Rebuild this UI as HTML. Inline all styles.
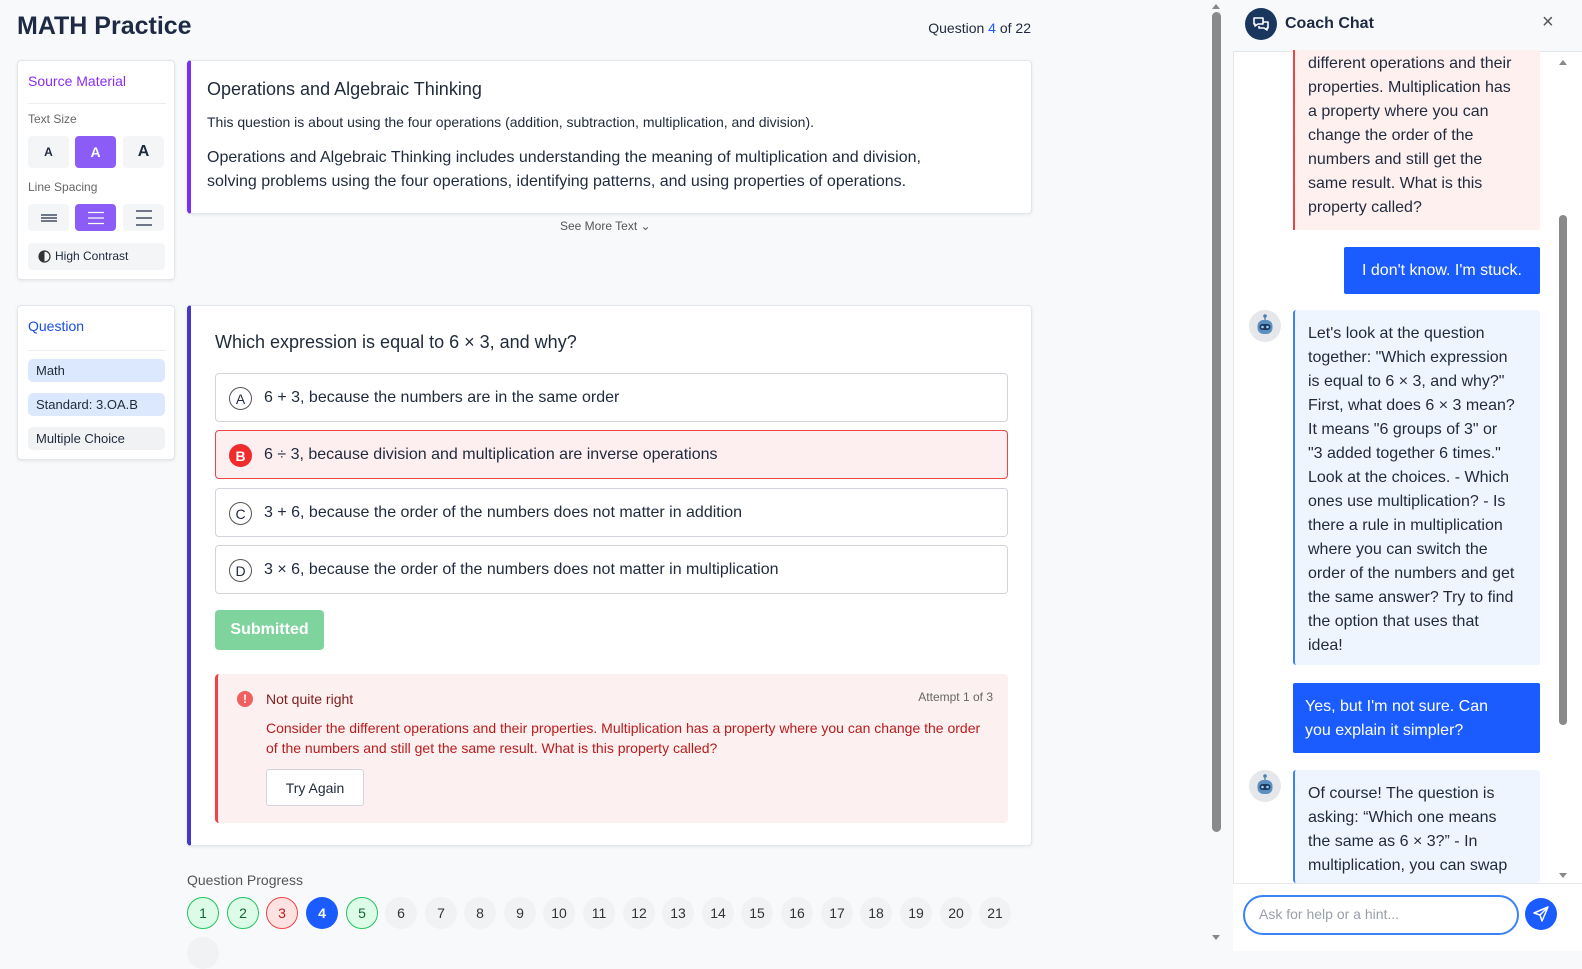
<!DOCTYPE html>
<html><head><meta charset="utf-8"><style>
*{box-sizing:border-box;margin:0;padding:0}
body{width:1582px;height:951px;overflow:hidden;background:#f8f9fb;font-family:"Liberation Sans",sans-serif;color:#1f2a3c;position:relative}
.abs{position:absolute}
.card{position:absolute;background:#fff;border:1px solid #e3e6ea;border-radius:4px;box-shadow:0 1px 3px rgba(0,0,0,.08)}
.btn{position:absolute;width:41px;height:32px;border-radius:4px;background:#f4f5f7;display:flex;align-items:center;justify-content:center;font-size:14px;font-weight:bold;color:#1f2a3c}
.btn.on{background:#8b5cf6;color:#fff}
.tag{position:absolute;left:10px;width:137px;height:23px;border-radius:5px;font-size:13px;padding:4px 8px;color:#1f2a3c}
.opt{position:absolute;left:27px;width:793px;height:49px;border:1px solid #d1d5db;border-radius:4px;background:#fff;font-size:16px;display:flex;align-items:center;padding-left:48px}
.opt .l{position:absolute;left:13px;top:13px;width:23px;height:23px;border:1px solid #555;border-radius:50%;font-size:14px;display:flex;align-items:center;justify-content:center}
.c{position:absolute;top:897px;width:32px;height:32px;border-radius:50%;background:#f1f2f4;font-size:14px;display:flex;align-items:center;justify-content:center;color:#333}
.bub{position:absolute;left:1293px;width:247px;font-size:16px;line-height:24px;padding-left:13px;color:#1f2a3c}
.av{position:absolute;left:1249px;width:32px;height:32px;border-radius:50%;background:#e5e7eb}
</style></head><body>
<div class="abs" style="left:17px;top:12px;font-size:25px;font-weight:bold;color:#1e2a44">MATH Practice</div>
<div class="abs" style="left:900px;top:20px;width:131px;text-align:right;font-size:14px;color:#1f2a3c">Question <span style="color:#1a5cff">4</span> of 22</div>

<div class="card" style="left:17px;top:60px;width:158px;height:220px">
 <div class="abs" style="left:10px;top:12px;font-size:14px;color:#8b2cf5">Source Material</div>
 <div class="abs" style="left:10px;top:42px;width:138px;border-top:1px solid #eceef1"></div>
 <div class="abs" style="left:10px;top:51px;font-size:12px;color:#666">Text Size</div>
 <div class="btn" style="left:10px;top:75px;font-size:12px">A</div>
 <div class="btn on" style="left:57px;top:75px">A</div>
 <div class="btn" style="left:105px;top:75px;font-size:16px">A</div>
 <div class="abs" style="left:10px;top:119px;font-size:12px;color:#666">Line Spacing</div>
 <div class="btn" style="left:10px;top:143px;height:27px"><svg width="18" height="10"><path d="M1 2h16M1 5h16M1 8h16" stroke="#1e2a44" stroke-width="1.3"/></svg></div>
 <div class="btn on" style="left:57px;top:143px;height:27px"><svg width="18" height="14"><path d="M1 1.5h16M1 7h16M1 12.5h16" stroke="#fff" stroke-width="1.3"/></svg></div>
 <div class="btn" style="left:105px;top:143px;height:27px"><svg width="18" height="16"><path d="M1 1h16M1 8h16M1 15h16" stroke="#1e2a44" stroke-width="1.3"/></svg></div>
 <div class="abs" style="left:10px;top:182px;width:137px;height:27px;background:#f4f5f7;border-radius:4px;font-size:12px;padding:6px 0 0 27px;color:#1f2a3c">High Contrast
  <svg class="abs" style="left:10px;top:7px" width="13" height="13"><circle cx="6.5" cy="6.5" r="5.5" fill="none" stroke="#333" stroke-width="1.2"/><path d="M6.5 1a5.5 5.5 0 0 0 0 11z" fill="#333"/></svg></div>
</div>

<div class="card" style="left:17px;top:305px;width:158px;height:155px">
 <div class="abs" style="left:10px;top:12px;font-size:14px;color:#1a4fe0">Question</div>
 <div class="abs" style="left:10px;top:44px;width:138px;border-top:1px solid #eceef1"></div>
 <div class="tag" style="top:53px;background:#dbe8fd">Math</div>
 <div class="tag" style="top:87px;background:#dbe8fd">Standard: 3.OA.B</div>
 <div class="tag" style="top:121px;background:#f1f2f4">Multiple Choice</div>
</div>

<div class="card" style="left:187px;top:60px;width:845px;height:154px;border-left:4px solid #7c2ff0">
 <div class="abs" style="left:16px;top:18px;font-size:18px">Operations and Algebraic Thinking</div>
 <div class="abs" style="left:16px;top:53px;font-size:14px">This question is about using the four operations (addition, subtraction, multiplication, and division).</div>
 <div class="abs" style="left:16px;top:85px;font-size:16px;line-height:24px;width:765px">Operations and Algebraic Thinking includes understanding the meaning of multiplication and division, solving problems using the four operations, identifying patterns, and using properties of operations.</div>
</div>
<div class="abs" style="left:560px;top:219px;font-size:12px;color:#555">See More Text ⌄</div>

<div class="card" style="left:187px;top:305px;width:845px;height:541px;border-left:4px solid #4338ca">
 <div class="abs" style="left:24px;top:26px;font-size:18px">Which expression is equal to 6 × 3, and why?</div>
 <div class="opt" style="top:67px;left:24px"><span class="l">A</span>6 + 3, because the numbers are in the same order</div>
 <div class="opt" style="top:124px;left:24px;background:#fdeff0;border-color:#ef4444"><span class="l" style="background:#ef2b2b;border-color:#ef2b2b;color:#fff;font-weight:bold">B</span>6 ÷ 3, because division and multiplication are inverse operations</div>
 <div class="opt" style="top:182px;left:24px"><span class="l">C</span>3 + 6, because the order of the numbers does not matter in addition</div>
 <div class="opt" style="top:239px;left:24px"><span class="l">D</span>3 × 6, because the order of the numbers does not matter in multiplication</div>
 <div class="abs" style="left:24px;top:304px;width:109px;height:40px;background:#7fd39d;border-radius:4px;color:#fff;font-size:16px;font-weight:bold;display:flex;align-items:center;justify-content:center">Submitted</div>
 <div class="abs" style="left:24px;top:368px;width:793px;height:149px;background:#fdf0f0;border-left:3px solid #ef4444;border-radius:4px">
  <div class="abs" style="left:19px;top:17px;width:16px;height:16px;border-radius:50%;background:#f0605e;color:#fff;font-size:12px;font-weight:bold;text-align:center;line-height:16px">!</div>
  <div class="abs" style="left:48px;top:17px;font-size:14px;color:#7f1d1d">Not quite right</div>
  <div class="abs" style="right:15px;top:16px;font-size:12px;color:#666">Attempt 1 of 3</div>
  <div class="abs" style="left:48px;top:44px;width:722px;font-size:14px;line-height:20px;color:#b91c1c">Consider the different operations and their properties. Multiplication has a property where you can change the order of the numbers and still get the same result. What is this property called?</div>
  <div class="abs" style="left:48px;top:95px;width:98px;height:37px;border:1px solid #d1d5db;border-radius:3px;background:#fff;font-size:14px;display:flex;align-items:center;justify-content:center">Try Again</div>
 </div>
</div>

<div class="abs" style="left:187px;top:872px;font-size:14px;color:#555">Question Progress</div>
<div class="c" style="left:187px;background:#dcfce7;border:1px solid #22c55e;color:#166534">1</div>
<div class="c" style="left:227px;background:#dcfce7;border:1px solid #22c55e;color:#166534">2</div>
<div class="c" style="left:266px;background:#fee2e2;border:1px solid #ef4444;color:#b91c1c">3</div>
<div class="c" style="left:306px;background:#1a5cff;color:#fff;font-weight:bold">4</div>
<div class="c" style="left:346px;background:#dcfce7;border:1px solid #22c55e;color:#166534">5</div>
<div class="c" style="left:385px">6</div><div class="c" style="left:425px">7</div><div class="c" style="left:464px">8</div><div class="c" style="left:504px">9</div><div class="c" style="left:543px">10</div><div class="c" style="left:583px">11</div><div class="c" style="left:623px">12</div><div class="c" style="left:662px">13</div><div class="c" style="left:702px">14</div><div class="c" style="left:741px">15</div><div class="c" style="left:781px">16</div><div class="c" style="left:821px">17</div><div class="c" style="left:860px">18</div><div class="c" style="left:900px">19</div><div class="c" style="left:940px">20</div><div class="c" style="left:979px">21</div>
<div class="c" style="left:187px;top:937px"></div>

<div class="abs" style="left:1210px;top:0;width:14px;height:951px;background:#f8f9fb"></div>
<div class="abs" style="left:1212px;top:12px;width:9px;height:820px;background:#8a8a8a;border-radius:5px"></div>
<div class="abs" style="left:1212px;top:0px;width:0;height:0;border:4px solid transparent;border-bottom:5px solid #888"></div>
<div class="abs" style="left:1212px;top:935px;width:0;height:0;border:4px solid transparent;border-top:5px solid #888"></div>

<div class="abs" style="left:1233px;top:0;width:349px;height:951px;background:#fff;border-left:1px solid #e5e7eb"></div>
<div class="abs" style="left:1233px;top:0;width:349px;height:52px;background:#f8f9fb;border-bottom:1px solid #e2e5e9"></div>
<div class="abs" style="left:1245px;top:8px;width:32px;height:32px;border-radius:50%;background:#1b365d"><svg width="32" height="32"><path d="M9 10h9v6h-5l-3 2v-2H9z M14 18v2h5l3 2v-2h1v-6h-5" fill="none" stroke="#fff" stroke-width="1.6" stroke-linejoin="round"/></svg></div>
<div class="abs" style="left:1285px;top:15px;font-size:16px;font-weight:bold;color:#1e2a44">Coach Chat</div>
<div class="abs" style="left:1542px;top:11px;font-size:20px;color:#555">×</div>

<div class="bub" style="top:50px;height:180px;background:#fff0f0;border-left:2px solid #ef4444;padding-top:2px">different operations and their<br>properties. Multiplication has<br>a property where you can<br>change the order of the<br>numbers and still get the<br>same result. What is this<br>property called?</div>
<div class="abs" style="left:1344px;top:247px;width:196px;height:47px;background:#1a5cff;border-radius:2px;color:#fff;font-size:16px;display:flex;align-items:center;justify-content:center">I don't know. I'm stuck.</div>
<div class="av" style="top:310px"><svg width="32" height="32"><circle cx="16" cy="6" r="1.8" fill="#4a7fb0"/><path d="M16 7v3" stroke="#4a7fb0" stroke-width="1.3"/><rect x="8.5" y="10" width="15" height="14" rx="6" fill="#5b8fc0"/><rect x="10.5" y="14" width="11" height="6" rx="3" fill="#1e3a5f"/><circle cx="13.5" cy="17" r="1.3" fill="#9fd4ff"/><circle cx="18.5" cy="17" r="1.3" fill="#9fd4ff"/></svg></div>
<div class="bub" style="top:310px;height:355px;background:#eef5ff;border-left:2px solid #3b82f6;padding-top:12px;border-radius:3px">Let's look at the question<br>together: "Which expression<br>is equal to 6 × 3, and why?"<br>First, what does 6 × 3 mean?<br>It means "6 groups of 3" or<br>"3 added together 6 times."<br>Look at the choices. - Which<br>ones use multiplication? - Is<br>there a rule in multiplication<br>where you can switch the<br>order of the numbers and get<br>the same answer? Try to find<br>the option that uses that<br>idea!</div>
<div class="abs" style="left:1293px;top:683px;width:247px;height:70px;background:#1a5cff;border-radius:2px;color:#fff;font-size:16px;line-height:24px;padding:12px 0 0 12px">Yes, but I'm not sure. Can<br>you explain it simpler?</div>
<div class="av" style="top:770px"><svg width="32" height="32"><circle cx="16" cy="6" r="1.8" fill="#4a7fb0"/><path d="M16 7v3" stroke="#4a7fb0" stroke-width="1.3"/><rect x="8.5" y="10" width="15" height="14" rx="6" fill="#5b8fc0"/><rect x="10.5" y="14" width="11" height="6" rx="3" fill="#1e3a5f"/><circle cx="13.5" cy="17" r="1.3" fill="#9fd4ff"/><circle cx="18.5" cy="17" r="1.3" fill="#9fd4ff"/></svg></div>
<div class="bub" style="top:770px;height:113px;background:#eef5ff;border-left:2px solid #3b82f6;padding-top:12px;border-radius:3px;overflow:hidden">Of course! The question is<br>asking: “Which one means<br>the same as 6 × 3?” - In<br>multiplication, you can swap</div>
<div class="abs" style="left:1559px;top:215px;width:8px;height:510px;background:#8a8a8a;border-radius:4px"></div>
<div class="abs" style="left:1559px;top:56px;width:0;height:0;border:4px solid transparent;border-bottom:5px solid #888"></div>
<div class="abs" style="left:1559px;top:873px;width:0;height:0;border:4px solid transparent;border-top:5px solid #888"></div>
<div class="abs" style="left:1233px;top:883px;width:349px;height:68px;background:#fff;border-top:1px solid #e5e7eb"></div>
<div class="abs" style="left:1243px;top:895px;width:276px;height:40px;border:2px solid #3b82f6;border-radius:20px;font-size:14px;color:#9aa0a8;padding:9px 0 0 14px">Ask for help or a hint...</div>
<div class="abs" style="left:1525px;top:898px;width:32px;height:32px;border-radius:50%;background:#1a5cff"><svg width="32" height="32"><path d="M23 9L9 15l6 2 2 6z M15 17l8-8" fill="none" stroke="#fff" stroke-width="1.5" stroke-linejoin="round"/></svg></div>
</body></html>
